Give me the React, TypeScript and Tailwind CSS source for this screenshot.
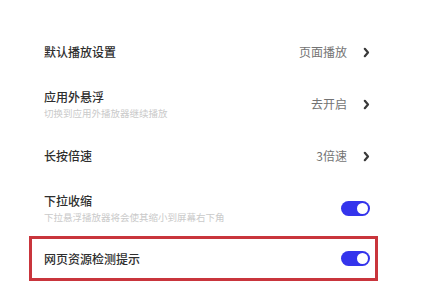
import React from "react";

function Chevron() {
  return (
    <svg width="7" height="11" viewBox="0 0 7 11" className="ml-[16px] text-[#3a3a3a]">
      <path d="M1.8 1.8 L5 5.5 L1.8 9.2" fill="none" stroke="currentColor" strokeWidth="2.2" strokeLinecap="round" strokeLinejoin="round" />
    </svg>
  );
}

function Toggle() {
  return (
    <div className="flex h-[15px] w-[29px] items-center justify-end rounded-full bg-[#3434ec] pr-[2px]">
      <div className="h-[11px] w-[11px] rounded-full bg-white" />
    </div>
  );
}

type Row = {
  title: string;
  sub?: string;
  value?: string;
  toggle?: boolean;
};

const rows: Row[] = [
  { title: "默认播放设置", value: "页面播放" },
  { title: "应用外悬浮", sub: "切换到应用外播放器继续播放", value: "去开启" },
  { title: "长按倍速", value: "3倍速" },
  { title: "下拉收缩", sub: "下拉悬浮播放器将会使其缩小到屏幕右下角", toggle: true },
];

function RowContent({ row }: { row: Row }) {
  return (
    <>
      <div className="flex flex-col">
        <span className="text-[12px] font-medium leading-[16px] text-[#2e2e2e]">{row.title}</span>
        {row.sub && (
          <span className="mt-[2px] text-[9.5px] leading-[12px] text-[#cacaca]">{row.sub}</span>
        )}
      </div>
      <div className="flex items-center">
        {row.value && (
          <>
            <span className="text-[12px] leading-[16px] text-[#737373]">{row.value}</span>
            <Chevron />
          </>
        )}
        {row.toggle && <Toggle />}
      </div>
    </>
  );
}

export default function App() {
  return (
    <div
      className="h-[297px] w-[422px] bg-white pl-[29px] pr-[44px] pt-[26px]"
      style={{ fontFamily: '"Noto Sans CJK SC", "Noto Sans", sans-serif' }}
    >
      {rows.map((row) => (
        <div key={row.title} className="flex h-[52px] items-center justify-between pl-[15px] pr-[8px]">
          <RowContent row={row} />
        </div>
      ))}
      <div className="mt-[2px] flex h-[45px] items-center justify-between border-[3px] border-[#c9353c] pl-[12px] pr-[5px]">
        <RowContent row={{ title: "网页资源检测提示", toggle: true }} />
      </div>
    </div>
  );
}
